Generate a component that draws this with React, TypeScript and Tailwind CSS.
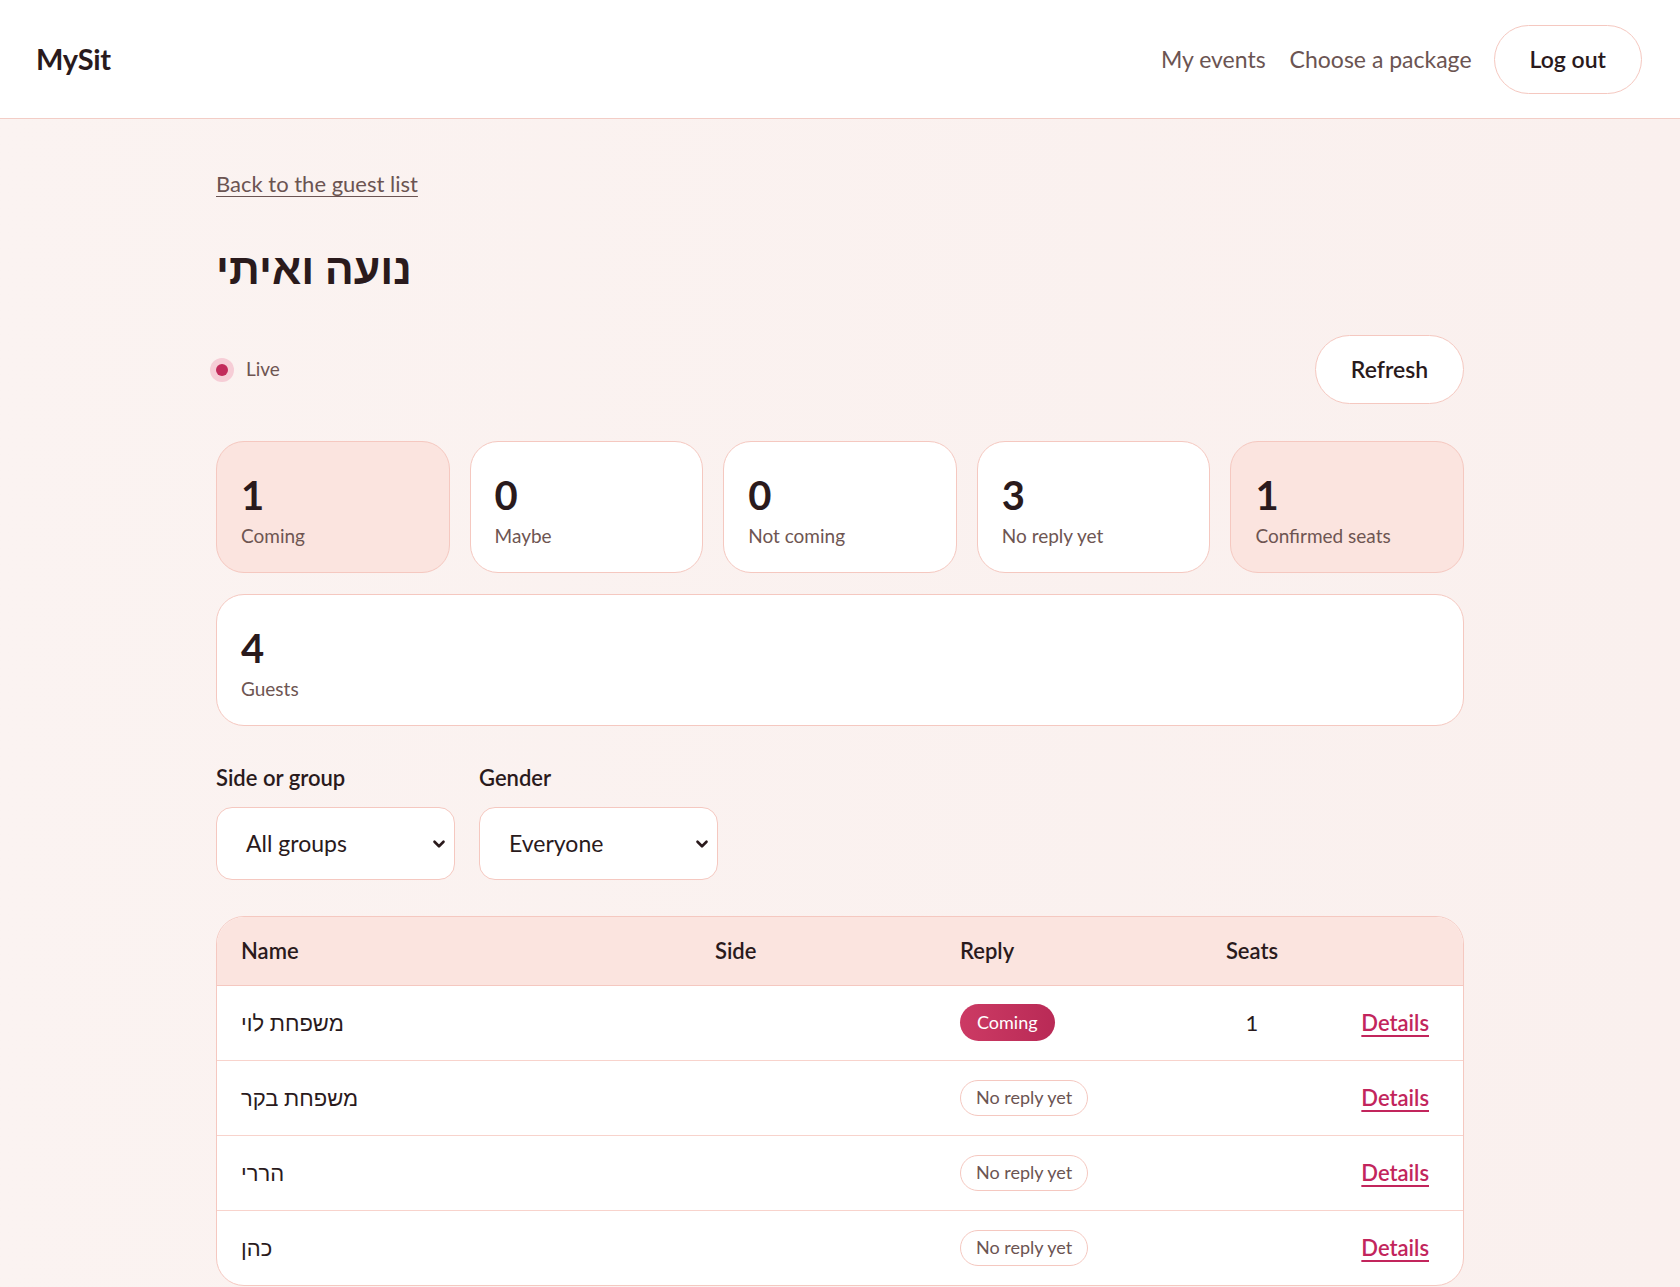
import React from 'react';
import { ChevronDown } from 'lucide-react';

const stats = [
  { value: 1, label: 'Coming', tint: true },
  { value: 0, label: 'Maybe', tint: false },
  { value: 0, label: 'Not coming', tint: false },
  { value: 3, label: 'No reply yet', tint: false },
  { value: 1, label: 'Confirmed seats', tint: true },
];

const guests = [
  { name: 'משפחת לוי', side: '', reply: 'coming', seats: '1' },
  { name: 'משפחת בקר', side: '', reply: 'none', seats: '' },
  { name: 'הררי', side: '', reply: 'none', seats: '' },
  { name: 'כהן', side: '', reply: 'none', seats: '' },
];

function StatCard({ value, label, tint }: { value: number; label: string; tint?: boolean }) {
  return (
    <div
      className={`rounded-[28px] border-[1.5px] border-[#f5c8c0] px-6 pt-[29px] pb-6 h-[132px] ${
        tint ? 'bg-[#fbe4df]' : 'bg-white'
      }`}
    >
      <div className="text-[40px] leading-[48px] font-bold text-[#2a1a1c]">{value}</div>
      <div className="mt-[3px] text-[19px] text-[#6e5552]">{label}</div>
    </div>
  );
}

function Select({ value }: { value: string }) {
  return (
    <div className="w-[239px] h-[73px] rounded-2xl border-[1.5px] border-[#f5c8c0] bg-white flex items-center justify-between pl-[29px] pr-[6px]">
      <span className="text-[23px] text-[#2a1a1c]">{value}</span>
      <ChevronDown size={18} strokeWidth={3.5} className="text-[#2a1a1c]" />
    </div>
  );
}

export default function App() {
  return (
    <div
      className="min-h-screen bg-gradient-to-r from-[#fbf3f1] to-[#faf0ee] text-[#2a1a1c]"
      style={{ fontFamily: 'Lato, "Liberation Sans", "DejaVu Sans", sans-serif' }}
    >
      {/* Header */}
      <header className="h-[119px] bg-white border-b border-[#f3cdc6] flex items-center justify-between pl-9 pr-[38px]">
        <div className="text-[29px] font-bold tracking-[-0.3px]">MySit</div>
        <nav className="flex items-center">
          <a className="text-[23px] text-[#6b5452] mr-6">My events</a>
          <a className="text-[23px] text-[#6b5452] mr-[22px]">Choose a package</a>
          <button className="h-[69px] px-[35px] rounded-full border-[1.5px] border-[#f5c8c0] bg-white text-[23px] font-semibold">
            Log out
          </button>
        </nav>
      </header>

      <main className="max-w-[1248px] mx-auto pt-[48px] pb-10">
        <a className="text-[22px] text-[#6b5452] underline underline-offset-[4px] decoration-1">
          Back to the guest list
        </a>

        <h1 className="mt-[42px] text-[43px] leading-[52px] font-bold">נועה ואיתי</h1>

        <div className="mt-[41px] flex items-center justify-between">
          <div className="flex items-center gap-[18px]">
            <span className="w-3 h-3 rounded-full bg-[#c22a5a] shadow-[0_0_0_6px_#f6cdd6]" />
            <span className="text-[19px] text-[#6e5552]">Live</span>
          </div>
          <button className="w-[149px] h-[69px] rounded-full border-[1.5px] border-[#f5c8c0] bg-white text-[23px] font-semibold">
            Refresh
          </button>
        </div>

        <div className="mt-[37px] grid grid-cols-5 gap-5">
          {stats.map((s) => (
            <StatCard key={s.label} {...s} />
          ))}
        </div>
        <div className="mt-[21px]">
          <StatCard value={4} label="Guests" />
        </div>

        {/* Filters */}
        <div className="mt-[37px] flex gap-6">
          <div>
            <div className="text-[22px] font-semibold leading-[30px]">Side or group</div>
            <div className="mt-[14px]">
              <Select value="All groups" />
            </div>
          </div>
          <div>
            <div className="text-[22px] font-semibold leading-[30px]">Gender</div>
            <div className="mt-[14px]">
              <Select value="Everyone" />
            </div>
          </div>
        </div>

        {/* Guest table */}
        <div className="mt-[36px] rounded-[28px] border-[1.5px] border-[#f5c8c0] bg-white overflow-hidden">
          <table className="w-full border-collapse">
            <thead>
              <tr className="bg-[#fbe4df] h-[68px] border-b-[1.5px] border-[#f5c8c0]">
                <th className="w-[474px] pl-6 text-left text-[22px] font-semibold">Name</th>
                <th className="w-[245px] pl-6 text-left text-[22px] font-semibold">Side</th>
                <th className="w-[266px] pl-6 text-left text-[22px] font-semibold">Reply</th>
                <th className="w-[100px] text-center text-[22px] font-semibold">Seats</th>
                <th />
              </tr>
            </thead>
            <tbody>
              {guests.map((g, i) => (
                <tr
                  key={g.name}
                  className={`h-[75px] ${i < guests.length - 1 ? 'border-b-[1.5px] border-[#f8d3cc]' : ''}`}
                >
                  <td className="pl-6 text-[22px]">{g.name}</td>
                  <td className="pl-6 text-[22px]">{g.side}</td>
                  <td className="pl-6">
                    {g.reply === 'coming' ? (
                      <span className="inline-flex items-center h-[37px] px-[17px] rounded-full bg-gradient-to-r from-[#cc3a64] to-[#b92a56] text-white text-[18px]">
                        Coming
                      </span>
                    ) : (
                      <span className="inline-flex items-center h-[36px] px-[15px] rounded-full border-[1.5px] border-[#f5c8c0] text-[#6b5452] text-[18px]">
                        No reply yet
                      </span>
                    )}
                  </td>
                  <td className="text-center text-[22px]">{g.seats}</td>
                  <td className="pr-[34px] text-right">
                    <a className="text-[22px] font-semibold text-[#c2255c] underline underline-offset-[4px] decoration-2">
                      Details
                    </a>
                  </td>
                </tr>
              ))}
            </tbody>
          </table>
        </div>
      </main>
    </div>
  );
}
